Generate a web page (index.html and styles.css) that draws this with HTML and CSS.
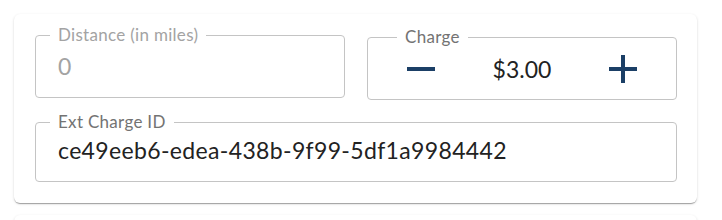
FILE: index.html
```html
<!DOCTYPE html>
<html lang="en">
<head>
    <meta charset="UTF-8">
    <meta name="viewport" content="width=device-width, initial-scale=1.0">
    <title>Charge details</title>
    <link rel="stylesheet" href="styles.css">
</head>
<body>
    <div class="card">
        <div class="row">
            <fieldset class="field disabled">
                <legend>Distance (in miles)</legend>
                <div class="value">0</div>
            </fieldset>
            <fieldset class="field charge">
                <legend>Charge</legend>
                <div class="stepper">
                    <button class="step" aria-label="Decrease">
                        <svg viewBox="0 0 24 24" width="48" height="48"><path d="M19 13H5v-2h14v2z"/></svg>
                    </button>
                    <span class="amount">$3.00</span>
                    <button class="step" aria-label="Increase">
                        <svg viewBox="0 0 24 24" width="48" height="48"><path d="M19 13h-6v6h-2v-6H5v-2h6V5h2v6h6v2z"/></svg>
                    </button>
                </div>
            </fieldset>
        </div>
        <fieldset class="field ext-id">
            <legend>Ext Charge ID</legend>
            <div class="value">ce49eeb6-edea-438b-9f99-5df1a9984442</div>
        </fieldset>
    </div>
    <div class="card next"></div>
</body>
</html>
```

FILE: styles.css
```css
* {
    box-sizing: border-box;
}

body {
    margin: 0;
    padding: 14px 25px 0 14px;
    background-color: #fff;
    font-family: Lato, "Open Sans", sans-serif;
    color: #222;
}

.card {
    background-color: #fff;
    border-radius: 6px;
    box-shadow: 0 2px 1px -1px rgba(0, 0, 0, 0.2), 0 1px 1px 0 rgba(0, 0, 0, 0.14), 0 1px 3px 0 rgba(0, 0, 0, 0.12);
    padding: 13px 20px 21px 21px;
}

.card.next {
    margin-top: 12px;
    height: 40px;
}

.row {
    display: grid;
    grid-template-columns: 1fr 1fr;
    gap: 22px;
    align-items: start;
}

.field {
    margin: 0;
    padding: 0 14px;
    min-width: 0;
    border: 1px solid #c4c4c4;
    border-radius: 4px;
}

.field legend {
    padding: 0 8px;
    font-size: 17px;
    line-height: 16px;
    letter-spacing: 0.3px;
    color: #737373;
}

.value {
    padding: 11px 8px 19px;
    font-size: 23px;
    line-height: 24px;
    letter-spacing: 0.35px;
    white-space: nowrap;
}

.disabled legend {
    color: #a3a3a3;
}

.disabled .value {
    color: #a3a3a3;
}

.charge {
    margin-top: 2px;
    padding: 0 29px;
}

.stepper {
    display: flex;
    align-items: center;
    justify-content: space-between;
    padding-bottom: 6px;
}

.step {
    display: flex;
    padding: 0;
    border: none;
    background: none;
    cursor: pointer;
}

.step svg {
    fill: #1b3f66;
}

.amount {
    font-size: 23px;
    line-height: 24px;
    color: #222;
}

.ext-id {
    margin-top: 14px;
}

.ext-id .value {
    padding: 8px 8px 19px;
}
```
